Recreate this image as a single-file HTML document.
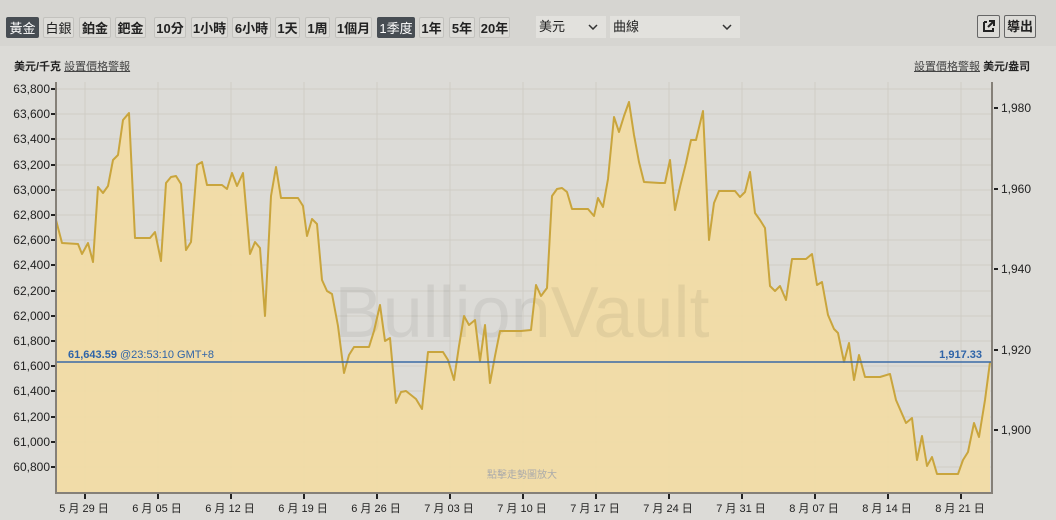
<!DOCTYPE html>
<html><head><meta charset="utf-8"><style>
body{margin:0;width:1056px;height:520px;background:#dcdbd7;font-family:"Liberation Sans","Noto Sans CJK TC",sans-serif;overflow:hidden;position:relative}
.bar{position:absolute;left:0;top:0;width:1056px;height:46px;background:#d6d5d1}
.b{position:absolute;top:17px;height:21px;border:1px solid #c3c2be;border-radius:2px;background:#dddcd8;font-size:13px;line-height:21px;text-align:center;color:#222;font-weight:bold;box-sizing:border-box}
.d{background:#474d53;color:#fff;border-color:#474d53}
.sel{position:absolute;top:16px;height:22px;background:#e2e1dd;font-size:13px;line-height:22px;color:#222;padding-left:3px;box-sizing:border-box}
.sel svg{position:absolute;right:8px;top:8px;left:auto}
.lab{position:absolute;font-size:11px;color:#222}
.u{text-decoration:underline;color:#444}
svg{position:absolute;left:0;top:0}
</style></head><body>
<div class="bar"></div>
<div class="b d" style="left:6px;width:33px;font-weight:normal">黃金</div>
<div class="b" style="left:43px;width:31px;font-weight:normal">白銀</div>
<div class="b" style="left:79px;width:32px">鉑金</div>
<div class="b" style="left:115px;width:31px">鈀金</div>
<div class="b" style="left:154px;width:32px">10分</div>
<div class="b" style="left:191px;width:37px">1小時</div>
<div class="b" style="left:232px;width:39px">6小時</div>
<div class="b" style="left:275px;width:25px">1天</div>
<div class="b" style="left:305px;width:25px">1周</div>
<div class="b" style="left:335px;width:37px">1個月</div>
<div class="b d" style="left:377px;width:38px;font-weight:normal">1季度</div>
<div class="b" style="left:419px;width:25px">1年</div>
<div class="b" style="left:449px;width:26px">5年</div>
<div class="b" style="left:479px;width:31px">20年</div>
<div class="sel" style="left:536px;width:70px">美元<svg width="10" height="6" viewBox="0 0 10 6"><path d="M1 1l4 4 4-4" fill="none" stroke="#333" stroke-width="1.5"/></svg></div>
<div class="sel" style="left:610px;width:130px">曲線<svg width="10" height="6" viewBox="0 0 10 6"><path d="M1 1l4 4 4-4" fill="none" stroke="#333" stroke-width="1.5"/></svg></div>
<div class="b" style="left:977px;top:15px;width:23px;height:23px;border-color:#666;background:#dcdbd7"><svg width="21" height="21" viewBox="0 0 21 21"><path d="M6 6h3M6 6v9h9v-3" fill="none" stroke="#222" stroke-width="2"/><path d="M10 11l5-5M11 5h5v5" fill="none" stroke="#222" stroke-width="2"/></svg></div>
<div class="b" style="left:1004px;top:15px;width:32px;height:23px;border-color:#666;background:#dcdbd7;line-height:21px">導出</div>
<div class="lab" style="left:14px;top:58px"><b>美元/千克</b> <span class="u">設置價格警報</span></div>
<div class="lab" style="left:914px;top:58px"><span class="u">設置價格警報</span> <b>美元/盎司</b></div>
<svg width="1056" height="520">
<g stroke="#cfcdc5" stroke-width="1">
<line x1="85" y1="82" x2="85" y2="492"/><line x1="158" y1="82" x2="158" y2="492"/><line x1="231" y1="82" x2="231" y2="492"/><line x1="304" y1="82" x2="304" y2="492"/><line x1="377" y1="82" x2="377" y2="492"/><line x1="450" y1="82" x2="450" y2="492"/><line x1="523" y1="82" x2="523" y2="492"/><line x1="596" y1="82" x2="596" y2="492"/><line x1="669" y1="82" x2="669" y2="492"/><line x1="742" y1="82" x2="742" y2="492"/><line x1="815" y1="82" x2="815" y2="492"/><line x1="888" y1="82" x2="888" y2="492"/><line x1="961" y1="82" x2="961" y2="492"/>
<line x1="56" y1="89" x2="992" y2="89"/><line x1="56" y1="114" x2="992" y2="114"/><line x1="56" y1="139" x2="992" y2="139"/><line x1="56" y1="165" x2="992" y2="165"/><line x1="56" y1="190" x2="992" y2="190"/><line x1="56" y1="215" x2="992" y2="215"/><line x1="56" y1="240" x2="992" y2="240"/><line x1="56" y1="265" x2="992" y2="265"/><line x1="56" y1="291" x2="992" y2="291"/><line x1="56" y1="316" x2="992" y2="316"/><line x1="56" y1="341" x2="992" y2="341"/><line x1="56" y1="366" x2="992" y2="366"/><line x1="56" y1="391" x2="992" y2="391"/><line x1="56" y1="417" x2="992" y2="417"/><line x1="56" y1="442" x2="992" y2="442"/><line x1="56" y1="467" x2="992" y2="467"/>
</g>
<polygon fill="#f2dba5" fill-opacity="0.93" points="56,492 56,220 62,243 78,244 82,254 88,243 93,262 98,187 103,193 108,186 113,160 118,155 123,120 129,113 135,238 150,238 155,232 161,261 166,183 171,177 176,176 181,184 186,250 191,242 197,165 202,162 207,185 222,185 227,189 232,173 237,186 243,173 250,254 255,242 260,248 265,316 271,196 276,167 281,198 298,198 303,206 307,236 312,219 317,224 322,280 327,291 332,294 338,326 344,373 349,355 354,347 369,347 374,331 380,305 385,341 390,338 396,403 401,392 406,391 411,395 416,399 422,409 428,352 443,352 448,360 454,380 459,346 464,316 469,325 475,320 480,361 485,325 490,383 495,356 500,331 516,331 521,331 531,330 536,285 541,296 547,288 552,196 557,189 562,188 567,192 572,209 588,209 594,216 598,198 603,207 608,179 614,117 619,132 624,116 629,102 634,135 639,162 644,182 660,183 665,183 670,160 675,210 680,187 686,163 691,140 696,140 703,111 709,240 714,203 719,191 735,191 740,197 745,192 750,172 755,213 760,220 765,228 770,286 775,291 780,286 786,300 792,259 806,259 812,254 817,285 822,282 828,315 834,329 838,333 844,362 849,343 854,380 859,355 865,377 880,377 890,374 896,400 906,423 912,418 917,460 922,436 927,466 932,457 937,474 958,474 963,460 968,452 974,423 979,437 985,400 990,362 990,492"/>
<text x="522" y="337" font-size="72" fill="#000" fill-opacity="0.06" text-anchor="middle" font-family="Liberation Sans">BullionVault</text>
<polyline fill="none" stroke="#c9a53d" stroke-width="2" stroke-linejoin="round" points="56,220 62,243 78,244 82,254 88,243 93,262 98,187 103,193 108,186 113,160 118,155 123,120 129,113 135,238 150,238 155,232 161,261 166,183 171,177 176,176 181,184 186,250 191,242 197,165 202,162 207,185 222,185 227,189 232,173 237,186 243,173 250,254 255,242 260,248 265,316 271,196 276,167 281,198 298,198 303,206 307,236 312,219 317,224 322,280 327,291 332,294 338,326 344,373 349,355 354,347 369,347 374,331 380,305 385,341 390,338 396,403 401,392 406,391 411,395 416,399 422,409 428,352 443,352 448,360 454,380 459,346 464,316 469,325 475,320 480,361 485,325 490,383 495,356 500,331 516,331 521,331 531,330 536,285 541,296 547,288 552,196 557,189 562,188 567,192 572,209 588,209 594,216 598,198 603,207 608,179 614,117 619,132 624,116 629,102 634,135 639,162 644,182 660,183 665,183 670,160 675,210 680,187 686,163 691,140 696,140 703,111 709,240 714,203 719,191 735,191 740,197 745,192 750,172 755,213 760,220 765,228 770,286 775,291 780,286 786,300 792,259 806,259 812,254 817,285 822,282 828,315 834,329 838,333 844,362 849,343 854,380 859,355 865,377 880,377 890,374 896,400 906,423 912,418 917,460 922,436 927,466 932,457 937,474 958,474 963,460 968,452 974,423 979,437 985,400 990,362"/>
<line x1="56" y1="362" x2="992" y2="362" stroke="#3a6aa6" stroke-width="1.5"/>
<text x="68" y="358" font-size="11" fill="#2f64a8"><tspan font-weight="bold">61,643.59</tspan> @23:53:10 GMT+8</text>
<text x="982" y="358" font-size="11" fill="#2f64a8" font-weight="bold" text-anchor="end">1,917.33</text>
<text x="522" y="478" font-size="10" fill="#aaa" text-anchor="middle" font-family="Liberation Sans, Noto Sans CJK TC">點擊走勢圖放大</text>
<line x1="56" y1="82" x2="56" y2="494" stroke="#858078" stroke-width="2"/>
<line x1="992" y1="82" x2="992" y2="494" stroke="#858078" stroke-width="2"/>
<line x1="55" y1="493" x2="993" y2="493" stroke="#858078" stroke-width="2"/>
<g font-size="12" fill="#222" text-anchor="end">
<text x="50" y="93">63,800</text><text x="50" y="118">63,600</text><text x="50" y="143">63,400</text><text x="50" y="169">63,200</text><text x="50" y="194">63,000</text><text x="50" y="219">62,800</text><text x="50" y="244">62,600</text><text x="50" y="269">62,400</text><text x="50" y="295">62,200</text><text x="50" y="320">62,000</text><text x="50" y="345">61,800</text><text x="50" y="370">61,600</text><text x="50" y="395">61,400</text><text x="50" y="421">61,200</text><text x="50" y="446">61,000</text><text x="50" y="471">60,800</text>
</g>
<g stroke="#222" stroke-width="2">
<line x1="51" y1="89" x2="55" y2="89"/><line x1="51" y1="114" x2="55" y2="114"/><line x1="51" y1="139" x2="55" y2="139"/><line x1="51" y1="165" x2="55" y2="165"/><line x1="51" y1="190" x2="55" y2="190"/><line x1="51" y1="215" x2="55" y2="215"/><line x1="51" y1="240" x2="55" y2="240"/><line x1="51" y1="265" x2="55" y2="265"/><line x1="51" y1="291" x2="55" y2="291"/><line x1="51" y1="316" x2="55" y2="316"/><line x1="51" y1="341" x2="55" y2="341"/><line x1="51" y1="366" x2="55" y2="366"/><line x1="51" y1="391" x2="55" y2="391"/><line x1="51" y1="417" x2="55" y2="417"/><line x1="51" y1="442" x2="55" y2="442"/><line x1="51" y1="467" x2="55" y2="467"/>
<line x1="994" y1="108" x2="998" y2="108"/><line x1="994" y1="189" x2="998" y2="189"/><line x1="994" y1="269" x2="998" y2="269"/><line x1="994" y1="350" x2="998" y2="350"/><line x1="994" y1="430" x2="998" y2="430"/>
<line x1="85" y1="494" x2="85" y2="499"/><line x1="158" y1="494" x2="158" y2="499"/><line x1="231" y1="494" x2="231" y2="499"/><line x1="304" y1="494" x2="304" y2="499"/><line x1="377" y1="494" x2="377" y2="499"/><line x1="450" y1="494" x2="450" y2="499"/><line x1="523" y1="494" x2="523" y2="499"/><line x1="596" y1="494" x2="596" y2="499"/><line x1="669" y1="494" x2="669" y2="499"/><line x1="742" y1="494" x2="742" y2="499"/><line x1="815" y1="494" x2="815" y2="499"/><line x1="888" y1="494" x2="888" y2="499"/><line x1="961" y1="494" x2="961" y2="499"/>
</g>
<g font-size="12" fill="#222">
<text x="1001" y="112">1,980</text><text x="1001" y="193">1,960</text><text x="1001" y="273">1,940</text><text x="1001" y="354">1,920</text><text x="1001" y="434">1,900</text>
</g>
<g font-size="11" fill="#222" text-anchor="middle" font-family="Liberation Sans, Noto Sans CJK TC">
<text x="84" y="512">5 月 29 日</text><text x="157" y="512">6 月 05 日</text><text x="230" y="512">6 月 12 日</text><text x="303" y="512">6 月 19 日</text><text x="376" y="512">6 月 26 日</text><text x="449" y="512">7 月 03 日</text><text x="522" y="512">7 月 10 日</text><text x="595" y="512">7 月 17 日</text><text x="668" y="512">7 月 24 日</text><text x="741" y="512">7 月 31 日</text><text x="814" y="512">8 月 07 日</text><text x="887" y="512">8 月 14 日</text><text x="960" y="512">8 月 21 日</text>
</g>
</svg>
</body></html>
